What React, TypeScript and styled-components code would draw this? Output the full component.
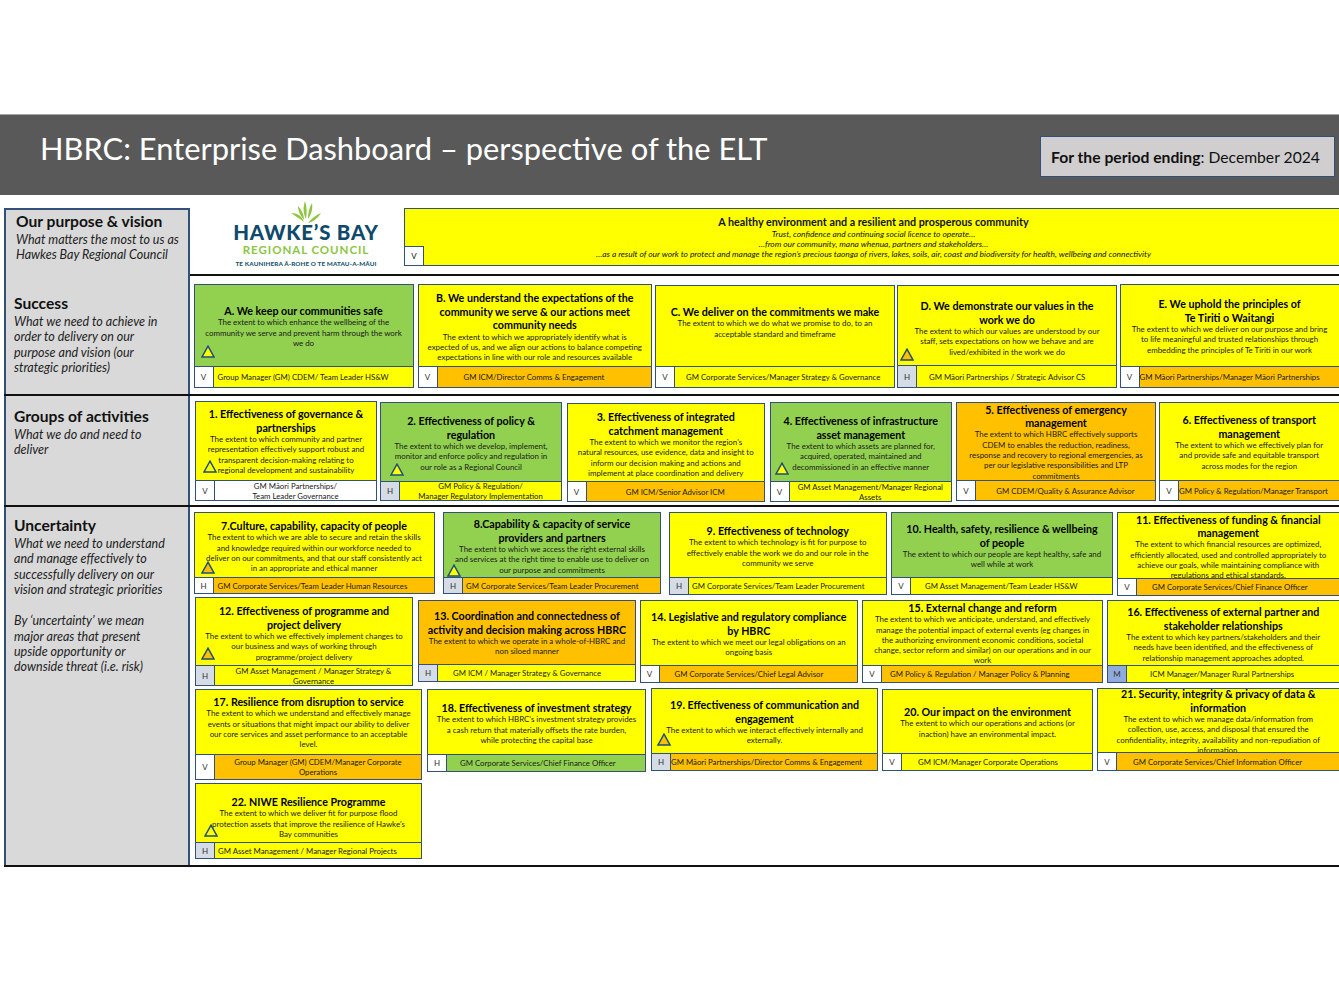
import React from 'react'
import styled, { createGlobalStyle } from 'styled-components'

const YELLOW = '#ffff00'
const GREEN = '#92d050'
const ORANGE = '#ffc000'
const WHITE = '#ffffff'
const EDGE = '#33507a'

const GlobalStyle = createGlobalStyle`
    html, body {
        margin: 0;
        background: #fff;
        overflow: hidden;
    }
    body {
        font-family: Lato, "Liberation Sans", sans-serif;
        color: #111;
    }
`

const Page = styled.div`
    width: 1339px;
    height: 998px;
    padding-top: 114px;
    box-sizing: border-box;
    overflow: hidden;
`

const Header = styled.header`
    height: 81px;
    box-sizing: border-box;
    background: #595959;
    border-top: 1px solid #a6a6a6;
    display: flex;
    align-items: center;
    justify-content: space-between;
    padding: 0 4px 0 40px;
`

const Title = styled.h1`
    margin: -13px 0 0;
    font-size: 30.85px;
    line-height: 36px;
    font-weight: 400;
    color: #fff;
    white-space: nowrap;
`

const PeriodBox = styled.div`
    width: 295px;
    height: 41px;
    margin-top: 3px;
    box-sizing: border-box;
    background: #d0cece;
    border: 1.5px solid ${EDGE};
    display: flex;
    align-items: center;
    padding-left: 10px;
    font-size: 15.7px;
    white-space: pre;
    b {
        font-weight: 700;
    }
`

const Main = styled.main`
    margin: 13px 0 0 4px;
`

const Section = styled.section<{ $h: number }>`
    height: ${(p) => p.$h}px;
    box-sizing: border-box;
    border-bottom: 2px solid #111;
    display: grid;
    grid-template-columns: 186px 1fr;
`

const Panel = styled.div<{ $top: number; $left: number; $first?: boolean }>`
    box-sizing: border-box;
    background: #d9d9d9;
    border-left: 2px solid ${EDGE};
    border-right: 2px solid ${EDGE};
    border-top: ${(p) => (p.$first ? `2px solid ${EDGE}` : 'none')};
    padding: ${(p) => p.$top}px 0 0 ${(p) => p.$left}px;
`

const PanelHeading = styled.h2`
    margin: 0 0 2px;
    font-size: 15.6px;
    line-height: 18px;
    font-weight: 700;
    color: #111;
`

const PanelText = styled.p`
    margin: 0 0 15.5px;
    font-size: 12.5px;
    line-height: 15.4px;
    font-style: italic;
    white-space: pre;
    color: #222;
`

const Content = styled.div<{ $top?: number }>`
    padding-top: ${(p) => p.$top ?? 0}px;
    min-width: 0;
`

const PurposeRow = styled.div`
    display: flex;
    height: 100%;
`

const Logo = styled.div`
    width: 214px;
    box-sizing: border-box;
    padding-left: 18px;
    flex: none;
    display: flex;
    flex-direction: column;
    align-items: center;
    margin: -7px 0 0 0;
`

const LogoName = styled.div`
    font-size: 20.4px;
    line-height: 17px;
    font-weight: 900;
    letter-spacing: 0.8px;
    color: #0f4a6b;
    white-space: nowrap;
`

const LogoRegion = styled.div`
    margin-top: 2px;
    font-size: 11.5px;
    line-height: 14px;
    font-weight: 700;
    letter-spacing: 0.95px;
    color: #8cc63f;
    white-space: nowrap;
`

const LogoMotto = styled.div`
    margin-top: 2px;
    font-size: 6.3px;
    line-height: 9px;
    font-weight: 900;
    letter-spacing: 0.12px;
    color: #1d5673;
    white-space: nowrap;
`

const Banner = styled.div`
    position: relative;
    flex: 1;
    height: 58px;
    margin-right: -4px;
    box-sizing: border-box;
    background: ${YELLOW};
    border: 1.5px solid ${EDGE};
    padding-top: 6px;
    text-align: center;
`

const BannerTitle = styled.div`
    font-size: 10.75px;
    line-height: 13.5px;
    font-weight: 700;
`

const BannerLine = styled.div`
    font-size: 8.4px;
    line-height: 10.3px;
    font-style: italic;
    white-space: nowrap;
`

const BannerTag = styled.span`
    position: absolute;
    left: -1px;
    bottom: -1px;
    width: 20px;
    height: 20px;
    box-sizing: border-box;
    background: #fff;
    border: 1.5px solid ${EDGE};
    font-size: 8px;
    display: flex;
    align-items: center;
    justify-content: center;
`

const Row = styled.div<{ $h: number }>`
    display: flex;
    align-items: flex-start;
    height: ${(p) => p.$h}px;
`

const CardBox = styled.article<{ $w: number; $h: number; $ml: number; $mt: number; $bg: string }>`
    position: relative;
    flex: none;
    width: ${(p) => p.$w}px;
    height: ${(p) => p.$h}px;
    margin: ${(p) => p.$mt}px 0 0 ${(p) => p.$ml}px;
    box-sizing: border-box;
    background: ${(p) => p.$bg};
    border: 1.5px solid ${EDGE};
    display: flex;
    flex-direction: column;
    overflow: hidden;
`

const CardBody = styled.div<{ $pad: number }>`
    flex: 1;
    min-height: 0;
    margin-top: ${(p) => p.$pad - 1}px;
    text-align: center;
`

const CardTitle = styled.h3`
    margin: 0;
    font-size: 10.7px;
    line-height: 13.7px;
    font-weight: 700;
    white-space: pre;
    color: #000;
`

const CardText = styled.p`
    margin: -0.5px 0 0;
    font-size: 7.9px;
    line-height: 10.3px;
    white-space: pre;
    color: #1a1a1a;
`

const Footer = styled.div<{ $h: number; $bg: string }>`
    flex: none;
    height: ${(p) => p.$h}px;
    box-sizing: border-box;
    background: ${(p) => p.$bg};
    border-top: 1.5px solid ${EDGE};
    display: flex;
    align-items: stretch;
`

const Tag = styled.span<{ $bg: string }>`
    flex: none;
    width: 19px;
    box-sizing: border-box;
    background: ${(p) => p.$bg};
    border-right: 1.5px solid ${EDGE};
    font-size: 8px;
    display: flex;
    align-items: center;
    justify-content: center;
    color: #333;
`

const FootLabel = styled.span<{ $pad?: number }>`
    flex: 1;
    min-width: 0;
    padding-left: ${(p) => p.$pad ?? 0}px;
    font-size: 7.8px;
    line-height: 10px;
    white-space: pre;
    display: flex;
    align-items: center;
    justify-content: ${(p) => (p.$pad === undefined ? 'center' : 'flex-start')};
    text-align: center;
    color: #1a1a1a;
`

const WarnIcon = styled.svg<{ $x: number; $y: number }>`
    position: absolute;
    left: ${(p) => p.$x}px;
    top: ${(p) => p.$y}px;
    width: 14px;
    height: 13px;
`

type CardData = {
    w: number
    h: number
    ml: number
    mt?: number
    bg: string
    pad: number
    title: string
    text: string
    tag: string
    tagBg?: string
    footBg: string
    footH: number
    foot: string
    footPad?: number
    warn?: [number, number, string]
}

const success: CardData[] = [
    { w: 220, h: 104, ml: 3.5, bg: GREEN, pad: 20, title: 'A. We keep our communities safe', text: 'The extent to which enhance the wellbeing of the\ncommunity we serve and prevent harm through the work\nwe do', tag: 'V', footBg: YELLOW, footH: 21, foot: 'Group Manager (GM) CDEM/ Team Leader HS&W', footPad: 4, warn: [6, 60, YELLOW] },
    { w: 234.5, h: 104, ml: 4, bg: YELLOW, pad: 7, title: 'B. We understand the expectations of the\ncommunity we serve & our actions meet\ncommunity needs', text: 'The extent to which we appropriately identify what is\nexpected of us, and we align our actions to balance competing\nexpectations in line with our role and resources available', tag: 'V', footBg: ORANGE, footH: 21, foot: 'GM ICM/Director Comms & Engagement', footPad: 26 },
    { w: 240, h: 103, ml: 3, mt: 1, bg: YELLOW, pad: 20, title: 'C. We deliver on the commitments we make', text: 'The extent to which we do what we promise to do, to an\nacceptable standard and timeframe', tag: 'V', footBg: YELLOW, footH: 21, foot: 'GM Corporate Services/Manager Strategy & Governance', footPad: 11 },
    { w: 220, h: 103, ml: 2, mt: 1, bg: YELLOW, pad: 14, title: 'D. We demonstrate our values in the\nwork we do', text: 'The extent to which our values are understood by our\nstaff, sets expectations on how we behave and are\nlived/exhibited in the work we do', tag: 'H', footBg: YELLOW, footH: 22, foot: 'GM Māori Partnerships / Strategic Advisor CS', footPad: 12, warn: [2, 62, ORANGE] },
    { w: 220, h: 104, ml: 2.5, bg: YELLOW, pad: 13, title: 'E. We uphold the principles of\nTe Tiriti o Waitangi', text: 'The extent to which we deliver on our purpose and bring\nto life meaningful and trusted relationships through\nembedding the principles of Te Tiriti in our work', tag: 'V', footBg: ORANGE, footH: 21, foot: 'GM Māori Partnerships/Manager Māori Partnerships', footPad: 0 },
]

const groups: CardData[] = [
    { w: 182, h: 100, ml: 5, bg: YELLOW, pad: 6, title: '1. Effectiveness of governance &\npartnerships', text: 'The extent to which community and partner\nrepresentation effectively support robust and\ntransparent decision-making relating to\nregional development and sustainability', tag: 'V', footBg: WHITE, footH: 20, foot: 'GM Māori Partnerships/\nTeam Leader Governance', warn: [7, 58, YELLOW] },
    { w: 182, h: 99, ml: 3, mt: 1, bg: GREEN, pad: 12, title: '2. Effectiveness of policy &\nregulation', text: 'The extent to which we develop, implement,\nmonitor and enforce policy and regulation in\nour role as a Regional Council', tag: 'H', footBg: YELLOW, footH: 19, foot: 'GM Policy & Regulation/\nManager Regulatory Implementation', warn: [9, 60, YELLOW] },
    { w: 198.5, h: 99, ml: 4.5, mt: 2, bg: YELLOW, pad: 7, title: '3. Effectiveness of integrated\ncatchment management', text: "The extent to which we monitor the region's\nnatural resources, use evidence, data and insight to\ninform our decision making and actions and\nimplement at place coordination and delivery", tag: 'V', footBg: ORANGE, footH: 20, foot: 'GM ICM/Senior Advisor ICM' },
    { w: 182.5, h: 100, ml: 4.5, mt: 1, bg: GREEN, pad: 12, title: '4. Effectiveness of infrastructure\nasset management', text: 'The extent to which assets are planned for,\nacquired, operated, maintained and\ndecommissioned in an effective manner', tag: 'V', footBg: YELLOW, footH: 20, foot: 'GM Asset Management/Manager Regional\nAssets', warn: [4, 59, YELLOW] },
    { w: 200, h: 99, ml: 4, mt: 1, bg: ORANGE, pad: 0.5, title: '5. Effectiveness of emergency\nmanagement', text: 'The extent to which HBRC effectively supports\nCDEM to enables the reduction, readiness,\nresponse and recovery to regional emergencies, as\nper our legislative responsibilities and LTP\ncommitments', tag: 'V', footBg: ORANGE, footH: 20, foot: 'GM CDEM/Quality & Assurance Advisor' },
    { w: 180.5, h: 99, ml: 3, mt: 1, bg: YELLOW, pad: 11, title: '6. Effectiveness of transport\nmanagement', text: 'The extent to which we effectively plan for\nand provide safe and equitable transport\nacross modes for the region', tag: 'V', footBg: ORANGE, footH: 20, foot: 'GM Policy & Regulation/Manager Transport', footPad: 0 },
]

const uncertaintyRows: { h: number; cards: CardData[] }[] = [
    {
        h: 85,
        cards: [
            { w: 241, h: 82, ml: 3.5, bg: YELLOW, pad: 7, title: '7.Culture, capability, capacity of people', text: 'The extent to which we are able to secure and retain the skills\nand knowledge required within our workforce needed to\ndeliver on our commitments, and that our staff consistently act\nin an appropriate and ethical manner', tag: 'H', tagBg: WHITE, footBg: ORANGE, footH: 16, foot: 'GM Corporate Services/Team Leader Human Resources', footPad: 4, warn: [6, 48, ORANGE] },
            { w: 218, h: 82, ml: 8.5, bg: GREEN, pad: 5, title: '8.Capability & capacity of service\nproviders and partners', text: 'The extent to which we access the right external skills\nand services at the right time to enable use to deliver on\nour purpose and commitments', tag: 'H', footBg: ORANGE, footH: 16, foot: 'GM Corporate Services/Team Leader Procurement', footPad: 3, warn: [3, 51, YELLOW] },
            { w: 217.5, h: 83, ml: 8, bg: YELLOW, pad: 12, title: '9. Effectiveness of technology', text: 'The extent to which technology is fit for purpose to\neffectively enable the work we do and our role in the\ncommunity we serve', tag: 'H', footBg: YELLOW, footH: 17, foot: 'GM Corporate Services/Team Leader Procurement', footPad: 3 },
            { w: 222, h: 83, ml: 4.5, bg: GREEN, pad: 10, title: '10. Health, safety, resilience & wellbeing\nof people', text: 'The extent to which our people are kept healthy, safe and\nwell while at work', tag: 'V', footBg: YELLOW, footH: 17, foot: 'GM Asset Management/Team Leader HS&W', footPad: 14 },
            { w: 222.5, h: 84, ml: 4, bg: YELLOW, pad: 0.5, title: '11. Effectiveness of funding & financial\nmanagement', text: 'The extent to which financial resources are optimized,\nefficiently allocated, used and controlled appropriately to\nachieve our goals, while maintaining compliance with\nregulations and ethical standards.', tag: 'V', footBg: ORANGE, footH: 17, foot: 'GM Corporate Services/Chief Finance Officer', footPad: 15 },
        ],
    },
    {
        h: 91,
        cards: [
            { w: 218, h: 89, ml: 5, bg: YELLOW, pad: 7, title: '12. Effectiveness of programme and\nproject delivery', text: 'The extent to which we effectively implement changes to\nour business and ways of working through\nprogramme/project delivery', tag: 'H', footBg: YELLOW, footH: 20, foot: 'GM Asset Management / Manager Strategy &\nGovernance', warn: [5, 49, ORANGE] },
            { w: 218, h: 82, ml: 5, mt: 3, bg: ORANGE, pad: 9, title: '13. Coordination and connectedness of\nactivity and decision making across HBRC', text: 'The extent to which we operate in a whole-of-HBRC and\nnon siloed manner', tag: 'H', footBg: YELLOW, footH: 17, foot: 'GM ICM / Manager Strategy & Governance', footPad: 15 },
            { w: 218.5, h: 83, ml: 3.5, mt: 3, bg: YELLOW, pad: 10, title: '14. Legislative and regulatory compliance\nby HBRC', text: 'The extent to which we meet our legal obligations on an\nongoing basis', tag: 'V', footBg: ORANGE, footH: 17, foot: 'GM Corporate Services/Chief Legal Advisor', footPad: 15 },
            { w: 241, h: 83, ml: 4, mt: 3, bg: YELLOW, pad: 1, title: '15. External change and reform', text: 'The extent to which we anticipate, understand, and effectively\nmanage the potential impact of external events (eg changes in\nthe authorizing environment economic conditions, societal\nchange, sector reform and similar) on our operations and in our\nwork', tag: 'V', footBg: ORANGE, footH: 17, foot: 'GM Policy & Regulation / Manager Policy & Planning', footPad: 8 },
            { w: 232.5, h: 83, ml: 4, mt: 3, bg: YELLOW, pad: 5, title: '16. Effectiveness of external partner and\nstakeholder relationships', text: 'The extent to which key partners/stakeholders and their\nneeds have been identified, and the effectiveness of\nrelationship management approaches adopted.', tag: 'M', footBg: YELLOW, footH: 17, foot: 'ICM Manager/Manager Rural Partnerships', footPad: 23 },
        ],
    },
    {
        h: 95,
        cards: [
            { w: 227, h: 91, ml: 5, mt: 1, bg: YELLOW, pad: 6, title: '17. Resilience from disruption to service', text: 'The extent to which we understand and effectively manage\nevents or situations that might impact our ability to deliver\nour core services and asset performance to an acceptable\nlevel.', tag: 'V', footBg: ORANGE, footH: 25, foot: 'Group Manager (GM) CDEM/Manager Corporate\nOperations' },
            { w: 219, h: 83, ml: 5, mt: 1, bg: YELLOW, pad: 12, title: '18. Effectiveness of investment strategy', text: "The extent to which HBRC's investment strategy provides\na cash return that materially offsets the rate burden,\nwhile protecting the capital base", tag: 'H', tagBg: WHITE, footBg: GREEN, footH: 17, foot: 'GM Corporate Services/Chief Finance Officer', footPad: 13 },
            { w: 227, h: 83, ml: 5, bg: YELLOW, pad: 10, title: '19. Effectiveness of communication and\nengagement', text: 'The extent to which we interact effectively internally and\nexternally.', tag: 'H', footBg: ORANGE, footH: 17, foot: 'GM Māori Partnerships/Director Comms & Engagement', footPad: 0, warn: [5, 44, ORANGE] },
            { w: 211, h: 82, ml: 4, mt: 1, bg: YELLOW, pad: 16, title: '20. Our impact on the environment', text: 'The extent to which our operations and actions (or\ninaction) have an environmental impact.', tag: 'V', footBg: YELLOW, footH: 17, foot: 'GM ICM/Manager Corporate Operations', footPad: 16 },
            { w: 242.5, h: 83, ml: 4, bg: YELLOW, pad: -1, title: '21. Security, integrity & privacy of data &\ninformation', text: 'The extent to which we manage data/information from\ncollection, use, access, and disposal that ensured the\nconfidentiality, integrity, availability and non-repudiation of\ninformation.', tag: 'V', footBg: ORANGE, footH: 18, foot: 'GM Corporate Services/Chief Information Officer', footPad: 16 },
        ],
    },
    {
        h: 80,
        cards: [
            { w: 227, h: 76, ml: 5, bg: YELLOW, pad: 12, title: '22. NIWE Resilience Programme', text: "The extent to which we deliver fit for purpose flood\nprotection assets that improve the resilience of Hawke's\nBay communities", tag: 'H', footBg: YELLOW, footH: 16, foot: 'GM Asset Management / Manager Regional Projects', footPad: 3, warn: [8, 40, YELLOW] },
        ],
    },
]

const tagColours: Record<string, string> = { V: WHITE, H: '#d6dce5', M: '#8faadc' }

function Warn({ x, y, fill }: { x: number; y: number; fill: string }) {
    return (
        <WarnIcon $x={x} $y={y} viewBox="0 0 14 13">
            <path d="M7 1.2 L13 12 L1 12 Z" fill={fill} stroke="#1f4e79" strokeWidth="1.5" />
        </WarnIcon>
    )
}

function Card({ card }: { card: CardData }) {
    return (
        <CardBox $w={card.w} $h={card.h} $ml={card.ml} $mt={card.mt ?? 0} $bg={card.bg}>
            <CardBody $pad={card.pad}>
                <CardTitle>{card.title}</CardTitle>
                <CardText>{card.text}</CardText>
            </CardBody>
            <Footer $h={card.footH} $bg={card.footBg}>
                <Tag $bg={card.tagBg ?? tagColours[card.tag]}>{card.tag}</Tag>
                <FootLabel $pad={card.footPad}>{card.foot}</FootLabel>
            </Footer>
            {card.warn && <Warn x={card.warn[0]} y={card.warn[1]} fill={card.warn[2]} />}
        </CardBox>
    )
}

function CardRow({ h, cards }: { h: number; cards: CardData[] }) {
    return (
        <Row $h={h}>
            {cards.map((c) => (
                <Card card={c} key={c.title} />
            ))}
        </Row>
    )
}

function Leaves() {
    return (
        <svg width="30" height="23" viewBox="0 0 30 23">
            <g fill="#8cc63f">
                <path d="M13 21 C8 17 4 15 0 12 C6 12 11 15 13 21 Z" />
                <path d="M13 19 C9 14 7 10 7 5 C11 9 13 14 13 19 Z" />
                <path d="M15 18 C12 12 12 6 14 0 C16 6 16 12 15 18 Z" />
                <path d="M17 18 C17 12 18 7 21 2 C22 8 20 14 17 18 Z" />
                <path d="M17 22 C20 18 25 14 30 12 C27 17 22 21 17 22 Z" />
            </g>
        </svg>
    )
}

export default function App() {
    return (
        <Page>
            <GlobalStyle />
            <Header>
                <Title>HBRC: Enterprise Dashboard – perspective of the ELT</Title>
                <PeriodBox>
                    <b>For the period ending</b>: December 2024
                </PeriodBox>
            </Header>
            <Main>
                <Section $h={68}>
                    <Panel $first $top={2} $left={10}>
                        <PanelHeading>Our purpose &amp; vision</PanelHeading>
                        <PanelText>{'What matters the most to us as\nHawkes Bay Regional Council'}</PanelText>
                    </Panel>
                    <Content>
                        <PurposeRow>
                            <Logo>
                                <Leaves />
                                <LogoName>HAWKE’S BAY</LogoName>
                                <LogoRegion>REGIONAL COUNCIL</LogoRegion>
                                <LogoMotto>TE KAUNIHERA Ā-ROHE O TE MATAU-A-MĀUI</LogoMotto>
                            </Logo>
                            <Banner>
                                <BannerTitle>A healthy environment and a resilient and prosperous community</BannerTitle>
                                <BannerLine>Trust, confidence and continuing social licence to operate…</BannerLine>
                                <BannerLine>…from our community, mana whenua, partners and stakeholders…</BannerLine>
                                <BannerLine>
                                    …as a result of our work to protect and manage the region’s precious taonga of rivers, lakes, soils, air, coast and biodiversity for health, wellbeing and connectivity
                                </BannerLine>
                                <BannerTag>V</BannerTag>
                            </Banner>
                        </PurposeRow>
                    </Content>
                </Section>
                <Section $h={120}>
                    <Panel $top={18} $left={8}>
                        <PanelHeading>Success</PanelHeading>
                        <PanelText>
                            {'What we need to achieve in\norder to delivery on our\npurpose and vision (our\nstrategic priorities)'}
                        </PanelText>
                    </Panel>
                    <Content $top={8}>
                        <CardRow h={104} cards={success} />
                    </Content>
                </Section>
                <Section $h={111}>
                    <Panel $top={11} $left={8}>
                        <PanelHeading>Groups of activities</PanelHeading>
                        <PanelText>{'What we do and need to\ndeliver'}</PanelText>
                    </Panel>
                    <Content $top={5}>
                        <CardRow h={100} cards={groups} />
                    </Content>
                </Section>
                <Section $h={360}>
                    <Panel $top={9} $left={8}>
                        <PanelHeading>Uncertainty</PanelHeading>
                        <PanelText>
                            {'What we need to understand\nand manage effectively to\nsuccessfully delivery on our\nvision and strategic priorities'}
                        </PanelText>
                        <PanelText>
                            {'By ‘uncertainty’ we mean\nmajor areas that present\nupside opportunity or\ndownside threat (i.e. risk)'}
                        </PanelText>
                    </Panel>
                    <Content $top={5}>
                        {uncertaintyRows.map((r) => (
                            <CardRow h={r.h} cards={r.cards} key={r.cards[0].title} />
                        ))}
                    </Content>
                </Section>
            </Main>
        </Page>
    )
}
